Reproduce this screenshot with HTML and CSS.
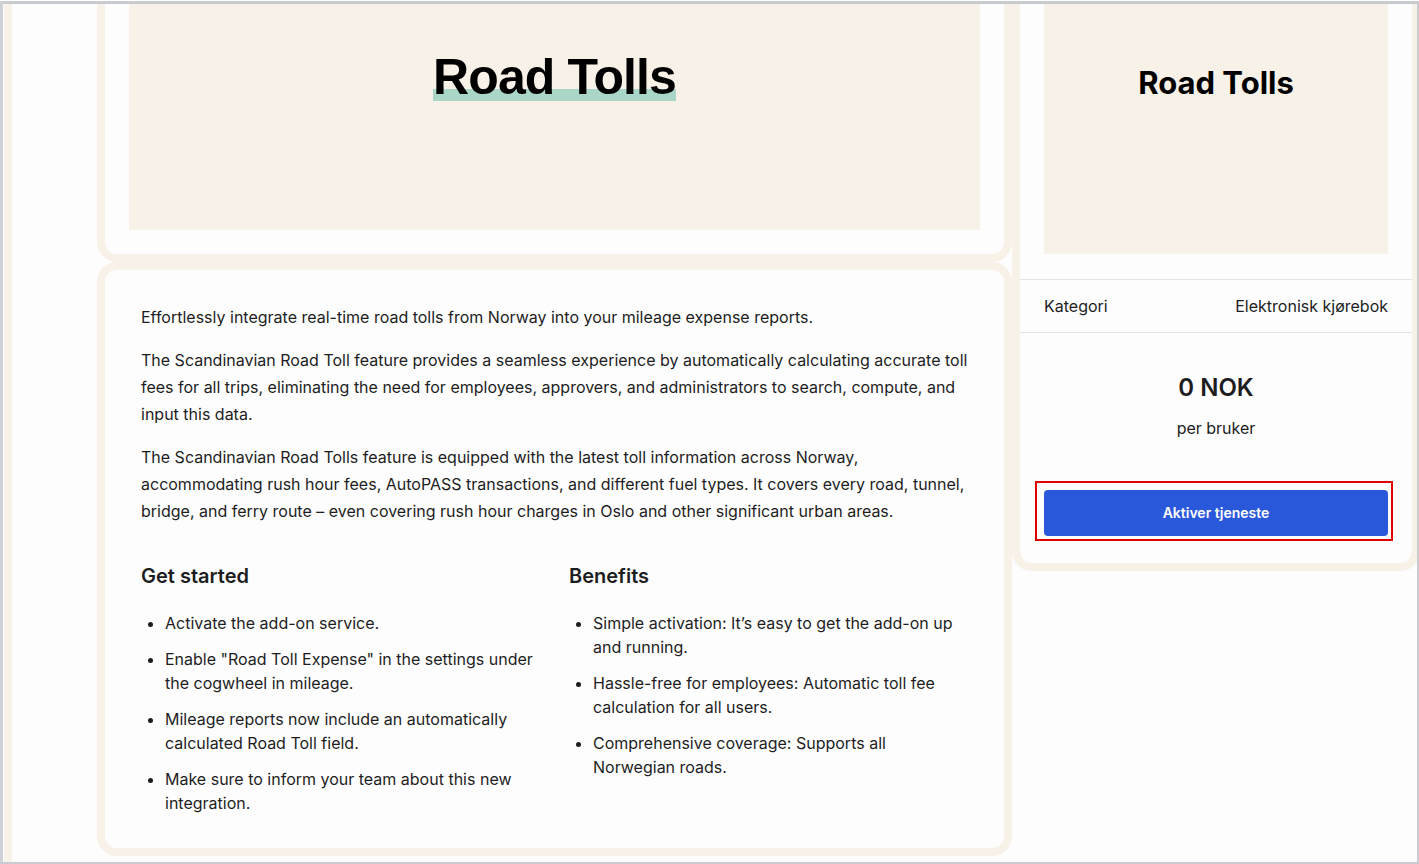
FILE: index.html
```html
<!DOCTYPE html>
<html lang="no">
  <head>
    <meta charset="UTF-8" />
    <meta name="viewport" content="width=device-width, initial-scale=1.0" />
    <title>Road Tolls</title>
    <link rel="stylesheet" href="styles.css">
  </head>
  <body>
    <div class="screen">
      <div class="page">
        <div class="layout">
          <div class="main-col">
            <section class="card card-hero">
              <div class="hero">
                <h1 class="hero-title"><span>Road Tolls</span></h1>
              </div>
            </section>

            <section class="card card-body">
              <p>Effortlessly integrate real-time road tolls from Norway into your mileage expense reports.</p>
              <p>The Scandinavian Road Toll feature provides a seamless experience by automatically calculating accurate toll fees for all trips, eliminating the need for employees, approvers, and administrators to search, compute, and input this data.</p>
              <p>The Scandinavian Road Tolls feature is equipped with the latest toll information across Norway, accommodating rush hour fees, AutoPASS transactions, and different fuel types. It covers every road, tunnel, bridge, and ferry route – even covering rush hour charges in Oslo and other significant urban areas.</p>

              <div class="columns">
                <div class="column">
                  <h3>Get started</h3>
                  <ul>
                    <li>Activate the add-on service.</li>
                    <li>Enable "Road Toll Expense" in the settings under the cogwheel in mileage.</li>
                    <li>Mileage reports now include an automatically calculated Road Toll field.</li>
                    <li>Make sure to inform your team about this new integration.</li>
                  </ul>
                </div>
                <div class="column">
                  <h3>Benefits</h3>
                  <ul>
                    <li>Simple activation: It’s easy to get the add-on up and running.</li>
                    <li>Hassle-free for employees: Automatic toll fee calculation for all users.</li>
                    <li>Comprehensive coverage: Supports all Norwegian roads.</li>
                  </ul>
                </div>
              </div>
            </section>
          </div>

          <aside class="card side-card">
            <div class="side-hero">
              <h2>Road Tolls</h2>
            </div>
            <div class="meta-row">
              <span>Kategori</span>
              <span>Elektronisk kjørebok</span>
            </div>
            <div class="price">
              <div class="price-amount">0 NOK</div>
              <div class="price-unit">per bruker</div>
              <div class="cta-wrap">
                <button type="button" class="cta">Aktiver tjeneste</button>
              </div>
            </div>
          </aside>
        </div>
      </div>
    </div>
  </body>
</html>
```

FILE: styles.css
```css
body {
  margin: 0;
  font-family: Inter, "Noto Sans", sans-serif;
  color: #1d1d1f;
  background: #ffffff;
}

.screen {
  box-sizing: border-box;
  height: 863px;
  margin-top: 1px;
  border-top: 3px solid #c8cbcf;
  border-left: 3px solid #cdd1d5;
  border-right: 2px solid #c8cbcf;
  border-bottom: 2px solid #c8cbcf;
  background: #fdfdfd;
  overflow: hidden;
}

.page {
  display: flow-root;
  height: 100%;
  margin-left: 1px;
  border-left: 8px solid #f8f1e8;
}

.layout {
  display: grid;
  grid-template-columns: 915px 408px;
  align-items: start;
  margin-top: -60px;
  padding-left: 85px;
}

.card {
  box-sizing: border-box;
  border: 8px solid #f8f1e8;
  border-radius: 20px;
  background: #fdfdfd;
}

.card-hero {
  padding: 24px;
}

.hero {
  box-sizing: border-box;
  height: 254px;
  padding-top: 71px;
  background: #f8f1e8;
  text-align: center;
}

.hero-title {
  margin: 0;
  font-family: "Liberation Sans", Arial, sans-serif;
  font-size: 50px;
  font-weight: 700;
  line-height: 60px;
  letter-spacing: -0.9px;
  color: #000000;
}

.hero-title span {
  background: linear-gradient(transparent 71%, #a9d6c6 71%, #a9d6c6 92%, transparent 92%);
}

.card-body {
  padding: 34px 36px 33px;
  font-size: 16px;
}

.card-body p {
  margin: 0 0 16px;
  line-height: 27px;
}

.card-body p:last-of-type {
  margin-bottom: 0;
}

.columns {
  display: grid;
  grid-template-columns: 1fr 1fr;
  gap: 29px;
  margin-top: 36px;
}

.column h3 {
  margin: 0 0 20px;
  font-size: 20px;
  font-weight: 600;
  line-height: 30px;
}

.column ul {
  margin: 0;
  padding-left: 24px;
}

.column li {
  line-height: 24px;
  margin-bottom: 12px;
}

.column li:last-child {
  margin-bottom: 0;
}

.side-hero {
  box-sizing: border-box;
  height: 278px;
  margin: 24px 24px 25px;
  padding-top: 87px;
  background: #f8f1e8;
  text-align: center;
}

.side-hero h2 {
  margin: 0;
  font-size: 31px;
  font-weight: 700;
  line-height: 40px;
  color: #000000;
}

.meta-row {
  display: flex;
  justify-content: space-between;
  padding: 16px 24px;
  border-top: 1px solid #e4e4e4;
  border-bottom: 1px solid #e4e4e4;
  font-size: 16px;
  line-height: 20px;
}

.price {
  padding: 39px 24px 22px;
  text-align: center;
}

.price-amount {
  font-size: 24px;
  font-weight: 600;
  line-height: 32px;
}

.price-unit {
  margin-top: 12px;
  font-size: 16px;
  line-height: 24px;
}

.cta-wrap {
  margin: 41px -5px 0 -9px;
  padding: 7px 3px 3px 7px;
  border: 2px solid #e00000;
}

.cta {
  display: block;
  width: 100%;
  height: 46px;
  padding: 0 0 2px;
  border: none;
  border-radius: 4px;
  background: #2a58db;
  color: #ffffff;
  font-family: Inter, "Noto Sans", sans-serif;
  font-size: 14px;
  font-weight: 600;
}
```
